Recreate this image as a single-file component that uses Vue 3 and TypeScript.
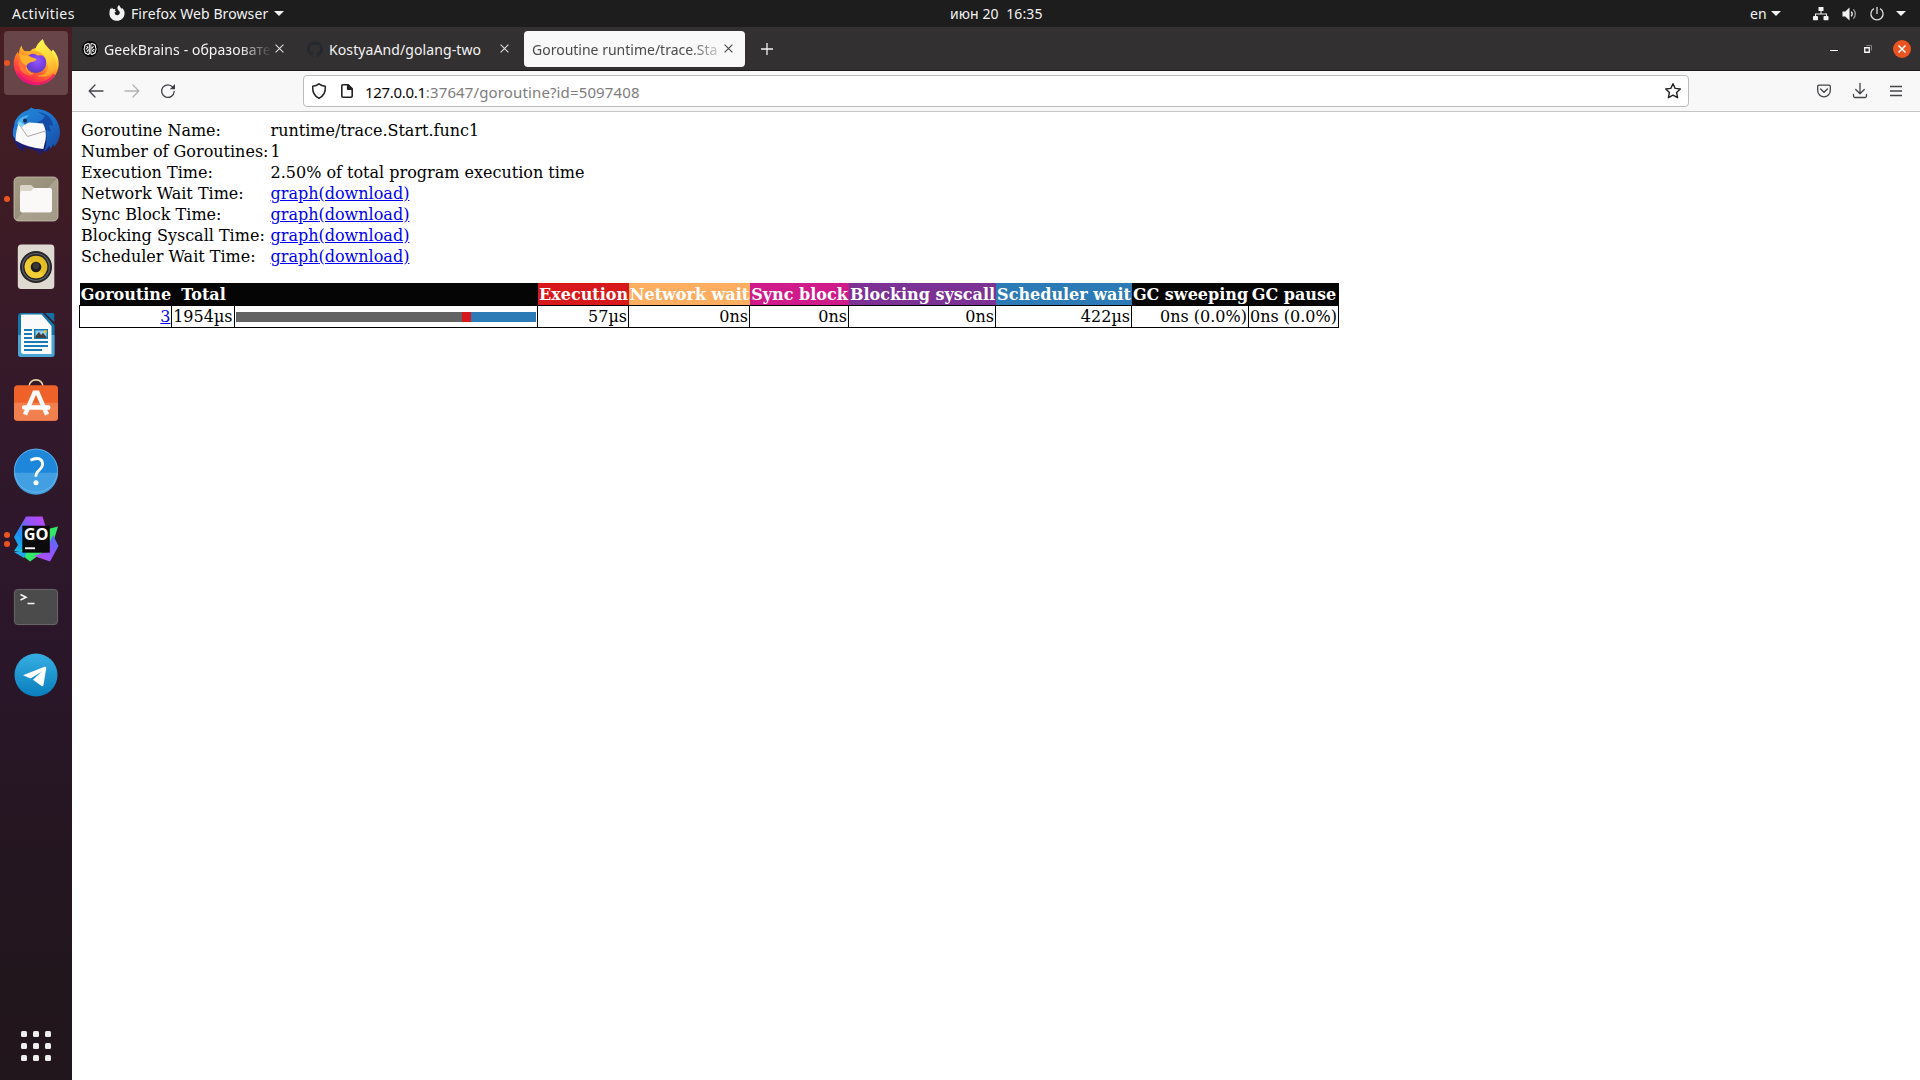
<script setup lang="ts">
interface InfoRow {
  label: string
  text?: string
}

interface Column {
  title: string
  value: string
  width: number
  color: string
}

const info: InfoRow[] = [
  { label: 'Goroutine Name:', text: 'runtime/trace.Start.func1' },
  { label: 'Number of Goroutines:', text: '1' },
  { label: 'Execution Time:', text: '2.50% of total program execution time' },
  { label: 'Network Wait Time:' },
  { label: 'Sync Block Time:' },
  { label: 'Blocking Syscall Time:' },
  { label: 'Scheduler Wait Time:' },
]

const columns: Column[] = [
  { title: 'Execution', value: '57µs', width: 91, color: '#d7191c' },
  { title: 'Network wait', value: '0ns', width: 121, color: '#fdae61' },
  { title: 'Sync block', value: '0ns', width: 99, color: '#d01c8b' },
  { title: 'Blocking syscall', value: '0ns', width: 147, color: '#7b3294' },
  { title: 'Scheduler wait', value: '422µs', width: 136, color: '#2c7bb6' },
  { title: 'GC sweeping', value: '0ns (0.0%)', width: 117, color: '#050505' },
  { title: 'GC pause', value: '0ns (0.0%)', width: 90, color: '#050505' },
]

const segments = [
  { width: 226, color: '#636363' },
  { width: 9, color: '#d7191c' },
  { width: 65, color: '#2c7bb6' },
]

const gridDots = Array.from({ length: 9 }, (_, i) => i)
</script>

<template>
  <div class="desktop">
    <header class="topbar">
      <span class="t-activities">Activities</span>
      <svg class="t-fox" width="16" height="16" viewBox="0 0 16 16">
        <path fill="#f2f2f2" fill-rule="evenodd" d="M1.3 3.2 2.2 4.2 2.9 2.6 4.2 4.3C5 4 6 4.1 6.6 4.4L5.6 5.6 7.4 6.4 5.7 7.2C5.5 9 6.7 10.2 8.2 10.2 10 10.2 11 8.8 10.8 7.3 10.6 5.8 8.6 5 8.4 3.2 8.3 1.9 9.2.7 10.3 0 10.3 1.6 12 2.5 12.7 3.8L13.1 3C14.8 4.4 15.7 6.3 15.6 8.4 15.4 12.6 12 15.8 8 15.8 3.8 15.8.5 12.5.4 8.4.4 6.4.8 4.7 1.3 3.2Z" />
      </svg>
      <span class="t-app">Firefox Web Browser</span>
      <i class="caret c1"></i>
      <span class="t-date">июн 20&nbsp; 16:35</span>
      <span class="t-lang">en</span>
      <i class="caret c2"></i>
      <svg class="t-net" width="16" height="14" viewBox="0 0 16 14" fill="#f2f2f2">
        <path d="M5.5 0h5v4h-5zM7.5 4h1v3h-1zM2 6.5h12v1H2zM2 7h1v3H2zM13 7h1v3h-1z" />
        <rect x="0" y="9" width="5" height="4.3" rx=".8" /><rect x="10.5" y="9" width="5" height="4.3" rx=".8" />
      </svg>
      <svg class="t-vol" width="16" height="14" viewBox="0 0 16 14">
        <path fill="#f2f2f2" d="M.5 4.5h2.8L7.5.5v13L3.3 9.5H.5z" />
        <path fill="none" stroke="#f2f2f2" stroke-width="1.3" d="M9.3 4.7q1.8 2.3 0 4.6" />
        <path fill="none" stroke="#a5a5a5" stroke-width="1.2" d="M11.4 2.3q3.8 4.7 0 9.4" />
      </svg>
      <svg class="t-pow" width="14" height="14" viewBox="0 0 14 14" fill="none" stroke="#dcdcdc" stroke-width="1.3">
        <path d="M3.9 1.6a6.1 6.1 0 1 0 6.2 0M7 0v7" />
      </svg>
      <i class="caret c3"></i>
    </header>

    <div class="workspace">
      <nav class="dock">
        <div class="app active">
          <i class="dot"></i>
          <svg width="48" height="48" viewBox="0 0 48 48">
            <defs>
              <linearGradient id="ff" x1=".8" y1=".1" x2=".25" y2=".95"><stop offset="0" stop-color="#fff44f" /><stop offset=".3" stop-color="#ffb52b" /><stop offset=".58" stop-color="#ff6a2b" /><stop offset=".82" stop-color="#ff3349" /><stop offset="1" stop-color="#e5127c" /></linearGradient>
              <linearGradient id="fy" x1=".4" y1="0" x2=".6" y2="1"><stop offset="0" stop-color="#fff44f" /><stop offset=".55" stop-color="#ffd43a" /><stop offset="1" stop-color="#ff9a2b" /></linearGradient>
              <radialGradient id="fp" cx=".55" cy=".4" r=".65"><stop offset="0" stop-color="#9059ff" /><stop offset=".55" stop-color="#7a3fe0" /><stop offset="1" stop-color="#4e3eb8" /></radialGradient>
            </defs>
            <path fill="url(#ff)" d="M9.5 6.5Q10 10 12.5 12 15.5 12 18 12.2 20 9.5 24 9L35 9 39 13 41 10.5Q47 17.5 46.7 25C46.3 37.5 36.5 46 24 46 11.5 46 2 36.5 1.7 25 1.6 19.5 3.5 16 5.7 13L6.5 15Q7.3 9.5 9.5 6.5Z" />
            <path fill="url(#fy)" d="M30.7 0C24.5 5 21.2 11.4 25.5 15.5L36 26Q37 36 25 37 36 40 42 32 46 25 42.5 17.5L42 19Q41 13 36.5 9.3 32 5 30.7 0Z" />
            <circle cx="24" cy="23.7" r="10.3" fill="url(#fp)" />
            <path fill="#ffb12c" d="M7.5 14.6 12 16.6Q17 16 19 18L24.5 20Q24 22.6 18.4 23.2 15.5 24.2 14.3 27 15 33 22 35 15.8 36 12 31 7.5 25 7.5 14.6Z" />
            <path fill="#ff7139" d="M7.5 17Q9 25 14 26 12.8 33 21 36 14 38 8.5 31 5 25 7.5 17Z" />
            <path fill="#ffad2a" d="M16.6 14.8Q21 10.5 26 12.5 32 14.5 34 20 31 15.2 26 16.6Q21 13.7 16.6 14.8Z" />
            <path fill="none" stroke="#e51478" stroke-width="2.4" opacity=".75" d="M6 35Q13 44.5 24.5 44.6 36 44.5 42.4 35.5" />
          </svg>
        </div>
        <div class="app">
          <svg width="48" height="48" viewBox="0 0 48 48">
            <defs>
              <linearGradient id="tb" x1="0" y1="0" x2="1" y2="1"><stop offset="0" stop-color="#2489d8" /><stop offset=".55" stop-color="#1c6fc9" /><stop offset="1" stop-color="#17459d" /></linearGradient>
            </defs>
            <path fill="#1d1d72" d="M1 17Q-2 34 8 42L12.500 45 11 40 25 44 29 48 31 43.500 36 45 38 41 43 37 38 20Z" />
            <path fill="#2b7fd3" d="M5 14Q0 20 1 29L4 33 6 20Z" />
            <path fill="url(#tb)" d="M16 3 19.500 .4 22 2C35 .8 47 10 48 24 48.300 31 45 37 42 40L41.500 37 38.500 42 37.500 39 32 45Q37 34 32 20L13 17 8 15 6 24Q1 19 3 14 7 6 16 3Z" />
            <path fill="#123f99" d="M26 5Q40 7 41 19L37 18 39 25 34 23 35 31 33 33Q35 20 25 15Q31 14 33 9Z" opacity=".75" />
            <path fill="#4eb4ec" d="M5 16Q8 9 17 8L11 15 14 19 9 21Z" />
            <circle cx="13" cy="13.5" r="2" fill="#172852" />
            <path fill="#fafafa" d="M7.300 15 12 18 17 15.500 31 16.500Q35 24 33.500 33L31.300 42Q16 41 3.500 33.500 4 22 7.300 15Z" />
            <path fill="none" stroke="#a9a9a9" stroke-width="1" d="M7.500 18 15.500 29.500 33.500 24" />
            <path fill="#7bd4f4" d="M7 15 12 18 10.500 20 7 18.500Z" />
          </svg>
        </div>
        <div class="app">
          <i class="dot"></i>
          <svg width="48" height="48" viewBox="0 0 48 48">
            <defs><linearGradient id="fl" x1="0" y1="0" x2="1" y2="1"><stop offset="0" stop-color="#a39b85" /><stop offset=".5" stop-color="#98907a" /><stop offset=".5" stop-color="#aaa28e" /><stop offset="1" stop-color="#a29a86" /></linearGradient></defs>
            <rect x="2" y="2" width="44" height="44" rx="4.5" fill="url(#fl)" stroke="#c6c0ad" stroke-width=".8" />
            <path fill="#dad5c8" d="M8 20V11.500Q8 10 9.500 10H19L23 13.500V20Z" />
            <path fill="#8d8572" opacity=".5" d="M8 17H40V38H8Z" />
            <path fill="#faf9f7" d="M8 18Q8 16 10 16H19L22 13H38Q40 13 40 15V35Q40 37.500 38 37.500H10Q8 37.500 8 35Z" />
          </svg>
        </div>
        <div class="app">
          <svg width="48" height="48" viewBox="0 0 48 48">
            <rect x="5.800" y="1.500" width="36.500" height="44.500" rx="3.500" fill="#dedad1" />
            <circle cx="24" cy="24" r="16" fill="#262626" /><circle cx="24" cy="24" r="13.500" fill="none" stroke="#5f606d" stroke-width="1.200" />
            <circle cx="24" cy="24" r="11.300" fill="#e5bd25" /><path d="M16 32a11.300 11.300 0 0 1 0-16l16 16a11.300 11.300 0 0 1-16 0" fill="#f4ce37" />
            <circle cx="24" cy="24" r="5.300" fill="#1d1d1d" /><circle cx="24" cy="23" r="3.200" fill="#383838" />
          </svg>
        </div>
        <div class="app">
          <svg width="48" height="48" viewBox="0 0 48 48">
            <path fill="#1375ab" d="M9 2H31L42.500 14V43Q42.500 46 39.500 46H9Q6 46 6 43V5Q6 2 9 2Z" />
            <path fill="#4aa5d5" d="M6 24H42.500V43Q42.500 46 39.500 46H9Q6 46 6 43Z" />
            <path fill="#1571a5" d="M33 2H41Q42.300 2 42.300 3.500V11.300Z" />
            <path fill="#fafafa" d="M10 3.500H29.500L39.500 15V43H12Q9 43 9 40.500V4.500Q9 3.500 10 3.500Z" />
            <path stroke="#187bb3" stroke-width="2" d="M12 19H20M12 23H20M12 27H20M12 31H36M12 35H36M12 39H30" />
            <path fill="#187bb3" d="M22 18H36V28H22Z" /><path fill="#8dcde9" d="M23.500 19.500H34.500V26.500H23.500Z" />
            <path fill="#404040" d="M23.500 27V25L27 21 29 24 31 22 34.500 26V27Z" /><circle cx="33.300" cy="20.500" r="1.500" fill="#edc22b" />
          </svg>
        </div>
        <div class="app">
          <svg width="48" height="48" viewBox="0 1.3 48 48">
            <path fill="none" stroke="#e8d4a5" stroke-width="1.700" d="M17 9C17 0 31 0 31 9" />
            <rect x="2" y="7.500" width="44" height="35.500" rx="3.500" fill="#ee622a" /><path fill="#f1804e" d="M2 25H46V39.500Q46 43 42.500 43H5.500Q2 43 2 39.500Z" />
            <path fill="none" stroke="#f8f8f8" stroke-width="4.500" d="M13 37 22.500 15H25.500L35 37" />
            <rect x="10" y="27.500" width="28.500" height="4.500" rx="2.200" fill="#fff" />
          </svg>
        </div>
        <div class="app">
          <svg width="48" height="48" viewBox="0 0.3 48 48">
            <circle cx="24" cy="24" r="22" fill="#1f87d9" /><path fill="#42a0e2" d="M2 26H46A22 22 0 0 1 2 26Z" /><circle cx="24" cy="24" r="21.600" fill="none" stroke="#6db7e8" stroke-width=".8" />
            <path fill="none" stroke="#fff" stroke-width="2.800" d="M18.500 13.500Q22 11.700 25 11.800 30.700 12 30.600 17.500 30.500 20.500 27 23.500 23.500 26.500 24 30" />
            <circle cx="24" cy="36" r="2.500" fill="#fff" />
          </svg>
        </div>
        <div class="app">
          <i class="dot two"></i><i class="dot three"></i>
          <svg width="48" height="48" viewBox="0 0 48 48">
            <defs>
              <linearGradient id="g1" x1="1" y1="0" x2="0" y2="1"><stop offset="0" stop-color="#c445f5" /><stop offset=".35" stop-color="#9354f8" /><stop offset=".65" stop-color="#1d8cf3" /><stop offset="1" stop-color="#16c4e2" /></linearGradient>
              <linearGradient id="g2" x1="1" y1="0" x2="0" y2="1"><stop offset="0" stop-color="#3878f7" /><stop offset=".45" stop-color="#8d56fa" /><stop offset="1" stop-color="#c14af7" /></linearGradient>
            </defs>
            <path fill="url(#g1)" d="M14 1.500H30.500L35 16 27 38 2 36 6 30 2 22Z" />
            <path fill="#34e86a" d="M46 11.500 40 31 18 46.500 6 37 23 26 36 14Z" />
            <path fill="url(#g2)" d="M41 20 46.500 31 38 46.500 22 41 33 37Z" />
            <path fill="#22a8ed" d="M2 37 16 35 12 43Z" />
            <rect x="10.300" y="10.700" width="27.500" height="27" fill="#0b0b0b" />
            <text x="11.700" y="25" textLength="24.800" lengthAdjust="spacingAndGlyphs" class="go">GO</text>
            <rect x="13" y="32.300" width="10" height="1.900" fill="#fff" />
          </svg>
        </div>
        <div class="app">
          <svg width="48" height="48" viewBox="0 0 48 48">
            <rect x="2.400" y="6.400" width="43.200" height="35.200" rx="3.500" fill="#4b4b4b" stroke="#696969" stroke-width="1" />
            <path fill="none" stroke="#f5f5f5" stroke-width="1.600" d="M8.500 11.500 14 14.200 8.500 17M15.500 20.500H22.500" />
          </svg>
        </div>
        <div class="app">
          <svg width="48" height="48" viewBox="0 0 48 48">
            <defs><linearGradient id="tg" x2="0" y2="1"><stop offset="0" stop-color="#37aee2" /><stop offset="1" stop-color="#087fbd" /></linearGradient></defs>
            <circle cx="24" cy="24" r="21.500" fill="url(#tg)" />
            <path fill="#fff" d="M11 24.200 32.500 15.800Q34.600 15.200 34.200 17.300L31.500 34Q31 36 29.200 34.800L21 28.800 29.500 20.700 18.500 27.500Z" />
          </svg>
        </div>
        <div class="grid-button"><i v-for="d in gridDots" :key="d"></i></div>
      </nav>

      <main class="browser">
        <div class="tabs">
          <div class="tab">
            <svg class="fav" width="16" height="16" viewBox="0 0 16 16">
              <circle cx="8" cy="8" r="8" fill="#080808" />
              <path fill="none" stroke="#f2f2f2" stroke-width="1.100" d="M7.300 3.200Q6.300 1.900 4.900 3 2.300 3.700 2.700 6.200 1.400 8 2.700 10 2.500 12.400 5 12.900 6.400 14 7.300 12.600ZM8.900 3.200Q9.900 1.900 11.300 3 13.900 3.700 13.500 6.200 14.800 8 13.500 10 13.700 12.400 11.200 12.900 9.800 14 8.900 12.600ZM4.800 5 5.700 6.700 3.900 8.300M5 11 5.600 9.400 7.200 8.500M11.400 5 10.500 6.700 9 7.300M11.400 11 10.500 9.300 12.400 8.200" />
            </svg>
            <span class="title n1">GeekBrains - образовате</span>
            <svg class="close" width="9" height="9" viewBox="0 0 9 9"><path d="M.6.600 8.400 8.400M8.400.600.600 8.400" /></svg>
          </div>
          <div class="tab second">
            <svg class="fav" width="16" height="16" viewBox="0 0 16 16"><path fill="#24292e" d="M8 .2a8 8 0 0 0-2.530 15.590c.4.070.55-.17.550-.38v-1.330c-2.230.48-2.700-1.080-2.700-1.080-.360-.920-.890-1.170-.890-1.170-.730-.5.050-.490.050-.490.810.060 1.230.830 1.230.830.710 1.230 1.870.870 2.330.670.070-.520.280-.870.510-1.070C4.780 11.570 2.900 10.900 2.900 7.820c0-.880.310-1.600.820-2.160-.080-.200-.360-1.020.080-2.120 0 0 .670-.210 2.200.820a7.600 7.600 0 0 1 4 0c1.530-1.030 2.200-.820 2.200-.820.440 1.100.160 1.920.080 2.120.510.560.820 1.280.820 2.160 0 3.090-1.880 3.750-3.660 3.950.290.250.540.730.540 1.480v2.160c0 .210.150.460.550.380A8 8 0 0 0 8 .2" /></svg>
            <span class="title n2">KostyaAnd/golang-two</span>
            <svg class="close" width="9" height="9" viewBox="0 0 9 9"><path d="M.6.600 8.400 8.400M8.400.600.600 8.400" /></svg>
          </div>
          <div class="tab current">
            <span class="title n3">Goroutine runtime/trace.Sta</span>
            <svg class="close" width="9" height="9" viewBox="0 0 9 9"><path d="M.6.600 8.400 8.400M8.400.600.600 8.400" /></svg>
          </div>
          <svg class="plus" width="12" height="12" viewBox="0 0 12 12"><path d="M6 0V12M0 6H12" stroke="#f1f1f1" stroke-width="1.300" /></svg>
          <div class="window-buttons">
            <i class="minimize"></i>
            <svg class="restore" width="8" height="8" viewBox="0 0 8 8" fill="none"><path d="M2.500 .5H7.500V5.500" stroke="#858383" /><path d="M.75 2.750H5.250V7.250H.750Z" stroke="#fff" stroke-width="1.300" /></svg>
            <svg width="18" height="18" viewBox="0 0 18 18"><circle cx="9" cy="9" r="9" fill="#e95420" /><path d="M5.500 5.500 12.500 12.500M12.500 5.500 5.500 12.500" stroke="#fff" stroke-width="1.500" /></svg>
          </div>
        </div>

        <div class="toolbar">
          <svg class="back" width="16" height="16" viewBox="0 0 16 16"><path d="M15 8H1.500M7 2 1.200 8 7 14" /></svg>
          <svg class="forward" width="16" height="16" viewBox="0 0 16 16"><path d="M1 8H14.500M9 2 14.800 8 9 14" /></svg>
          <svg class="reload" width="16" height="16" viewBox="0 0 16 16"><path d="M14.200 8.500A6.300 6.300 0 1 1 12.800 4.100" /><path d="M15 1V6.200H9.800Z" fill="#3e3e44" stroke="none" /></svg>
          <div class="url">
            <svg class="shield" width="16" height="16" viewBox="0 0 16 16"><path d="M8 .9Q10.500 3 14.300 3.200 14.900 12 8 15.200 1.100 12 1.700 3.200 5.500 3 8 .9Z" /></svg>
            <svg class="page" width="14" height="16" viewBox="0 0 14 16"><path d="M3 1.800H8.200L12.200 5.700V13Q12.200 14.200 11 14.200H3Q1.800 14.200 1.800 13V3Q1.800 1.800 3 1.800Z" /><path d="M7.700 2V6.200H12Z" fill="#222" /></svg>
            <span class="address"><b>127.0.0.1</b>:37647/goroutine?id=5097408</span>
            <svg class="star" width="18" height="18" viewBox="0 0 18 18"><path d="M9 1.700 11.200 6.400 16.300 7 12.600 10.500 13.600 15.700 9 13.200 4.400 15.700 5.400 10.500 1.700 7 6.800 6.400Z" /></svg>
          </div>
          <svg class="pocket" width="16" height="16" viewBox="0 0 16 16"><path d="M3 2.200H13Q14.300 2.200 14.300 3.500V7.500A6.300 6.300 0 0 1 1.700 7.500V3.500Q1.700 2.200 3 2.200ZM4.600 6 8 9.300 11.400 6" /></svg>
          <svg class="download" width="16" height="16" viewBox="0 0 16 16"><path d="M8 .5V10.700M3.700 6.500 8 10.800 12.300 6.500M1.500 11.500V13Q1.500 14.500 3 14.500H13Q14.500 14.500 14.500 13V11.500" /></svg>
          <svg class="menu" width="12" height="12" viewBox="0 0 12 12"><path d="M0 1.500H12M0 6H12M0 10.500H12" /></svg>
        </div>

        <div class="page-body">
          <table class="info">
            <tbody>
              <tr v-for="row in info" :key="row.label">
                <td>{{ row.label }}</td>
                <td><template v-if="row.text">{{ row.text }}</template><template v-else><a href="#">graph</a><a href="#">(download)</a></template></td>
              </tr>
            </tbody>
          </table>
          <table class="details">
            <colgroup>
              <col style="width: 93px" /><col style="width: 63px" /><col style="width: 303px" />
              <col v-for="c in columns" :key="c.title" :style="{ width: c.width + 'px' }" />
            </colgroup>
            <thead>
              <tr>
                <th>Goroutine</th><th>Total</th><th></th>
                <th v-for="c in columns" :key="c.title" :style="{ backgroundColor: c.color }">{{ c.title }}</th>
              </tr>
            </thead>
            <tbody>
              <tr>
                <td><a href="#">3</a></td>
                <td>1954µs</td>
                <td><div class="bar"><i v-for="s in segments" :key="s.color" :style="{ width: s.width + 'px', backgroundColor: s.color }"></i></div></td>
                <td v-for="c in columns" :key="c.title">{{ c.value }}</td>
              </tr>
            </tbody>
          </table>
        </div>
      </main>
    </div>
  </div>
</template>

<style>
html, body { margin: 0; overflow: hidden; background: #fff; }
</style>

<style scoped>
.desktop { width: 1920px; height: 1080px; display: flex; flex-direction: column; overflow: hidden; font: 14px/20px "Noto Sans", "Open Sans", sans-serif; }
svg { display: block; flex: none; overflow: visible; }
span { white-space: pre; }

.topbar { height: 27px; background: #1d1d1d; color: #f2f2f2; display: flex; align-items: center; flex: none; }
.t-activities { margin-left: 12px; width: 63px; letter-spacing: .45px; }
.t-fox { margin: -1px 5px 0 34px; }
.t-app { width: 138px; margin-left: 1px; letter-spacing: .1px; }
.caret { flex: none; border: 5px solid transparent; border-top-color: #f2f2f2; border-bottom: 0; }
.c1 { margin-left: 5px; }
.t-date { margin-left: 666px; width: 94px; letter-spacing: .1px; }
.t-lang { margin-left: 706px; width: 17px; }
.c2 { margin-left: 4px; }
.t-net { margin-left: 32px; }
.t-vol { margin-left: 13px; }
.t-pow { margin-left: 12px; }
.c3 { margin-left: 12px; }

.workspace { flex: 1; display: flex; min-height: 0; }
.dock { width: 72px; flex: none; box-sizing: border-box; padding-top: 4px; display: flex; flex-direction: column; align-items: center; gap: 4px; background: linear-gradient(#461e22 0, #3c1b26 20%, #31182b 40%, #2a1629 60%, #23161f 83%, #21161b 100%); }
.app { position: relative; width: 64px; height: 64px; flex: none; border-radius: 4px; display: flex; align-items: center; justify-content: center; }
.active { background: #674548; }
.dot { position: absolute; left: 0; top: 29px; width: 6px; height: 6px; border-radius: 50%; background: #e95420; }
.dot.two { top: 25px; }
.dot.three { top: 34px; }
.go { font: bold 15.5px "Open Sans", sans-serif; fill: #fff; }
.grid-button { margin-top: auto; margin-bottom: 19px; display: grid; grid-template-columns: repeat(3, 6px); gap: 6px; }
.grid-button i { width: 6px; height: 6px; border-radius: 1.5px; background: #eeeeec; }

.browser { flex: 1; min-width: 0; display: flex; flex-direction: column; background: #fff; }
.tabs { height: 44px; box-sizing: border-box; border-bottom: 1px solid #1b191a; background: #333031; display: flex; align-items: center; color: #f3f3f3; flex: none; }
.tab { width: 225px; height: 36px; box-sizing: border-box; display: flex; align-items: center; padding-left: 10px; flex: none; }
.tab .fav { margin-right: 6px; }
.title { flex: none; line-height: 22px; margin-top: 2px; }
.n1 { width: 168px; letter-spacing: .1px; -webkit-mask-image: linear-gradient(90deg, #000 136px, transparent 168px); mask-image: linear-gradient(90deg, #000 136px, transparent 168px); }
.n2 { width: 164px; letter-spacing: .1px; }
.n3 { width: 189px; -webkit-mask-image: linear-gradient(90deg, #000 157px, transparent 196px); mask-image: linear-gradient(90deg, #000 157px, transparent 196px); }
.close { margin-left: 3px; stroke: #dedede; stroke-width: 1.1; }
.second { padding-left: 10px; }
.second .close { margin-left: 7px; }
.current { margin-left: 2px; width: 221px; padding-left: 8px; background: #f9f9fa; border-radius: 4px; color: #4b4a4b; }
.current .close { margin-left: 3px; stroke: #454545; }
.plus { margin-left: 16px; }
.window-buttons { margin-left: auto; padding-right: 9px; display: flex; align-items: center; }
.minimize { width: 8px; height: 1px; background: #fff; margin: 4px 26px 0 0; }
.restore { margin-right: 21px; }

.toolbar { height: 41px; box-sizing: border-box; border-bottom: 1px solid #c5c5c5; background: #f8f8f8; display: flex; align-items: center; flex: none; }
.toolbar svg { fill: none; stroke: #444449; stroke-width: 1.3; stroke-linecap: round; stroke-linejoin: round; }
.back { margin-left: 16px; }
.toolbar .forward { margin-left: 20px; stroke: #b2b2b2; }
.reload { margin-left: 20px; }
.url { margin-left: 127px; width: 1386px; height: 32px; box-sizing: border-box; border: 1px solid #bcbcbf; border-radius: 4px; background: #fff; display: flex; align-items: center; flex: none; }
.url .shield { margin-left: 7px; stroke: #222; stroke-width: 1.5; }
.url .page { margin-left: 13px; stroke: #222; stroke-width: 1.6; }
.address { margin: 2px 0 0 11px; font-size: 15px; color: #7d7d7d; letter-spacing: .13px; }
.address b { font-weight: normal; color: #080808; letter-spacing: -.3px; }
.url .star { margin-left: auto; margin-right: 6px; stroke: #222; stroke-width: 1.4; }
.pocket { margin-left: 127px; }
.download { margin-left: 20px; }
.menu { margin-left: 22px; }
.toolbar .menu { stroke-linecap: butt; }

.page-body { padding: 8px 0 0 7px; font: 16px/19px "DejaVu Serif", serif; color: #000; }
table { border-spacing: 0; }
a { color: #0000ee; text-decoration: underline; }
.info { margin-left: 1px; }
.info td { padding: 1px; height: 19px; white-space: nowrap; }
.info td:first-child { width: 187.5px; }
.details { margin-top: 16px; table-layout: fixed; width: 1260px; white-space: nowrap; }
.details th { height: 19px; padding: 2px 0 1px; background: #050505; color: #fff; text-align: center; }
.details th:first-child { background-clip: padding-box; border-left: 1px solid transparent; }
.details td { height: 19px; padding: 1px 1px 1px 0; text-align: right; border: solid #000; border-width: 1px 1px 1px 0; }
.details td:first-child { border-left-width: 1px; padding-right: .5px; }
.details td:nth-child(2) { padding-right: 1.5px; }
.bar { display: flex; height: 10px; width: 300px; margin-left: 1px; }
.bar i { height: 10px; }
</style>
